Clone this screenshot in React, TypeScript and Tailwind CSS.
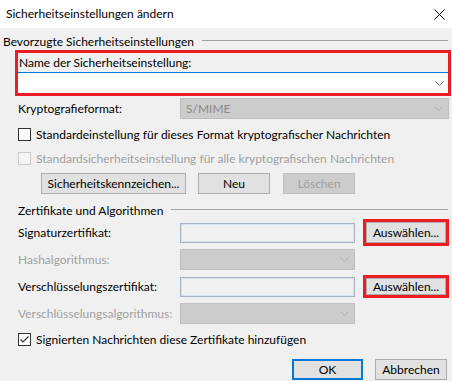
import React from "react";

function Chevron({ color }: { color: string }) {
    return (
        <svg width="9" height="5" viewBox="0 0 9 5" fill="none">
            <path d="M0.5 0.5 L4.5 4.5 L8.5 0.5" stroke={color} strokeWidth="1" />
        </svg>
    );
}

function Checkbox({ checked, disabled }: { checked?: boolean; disabled?: boolean }) {
    return (
        <div
            className={`w-[13px] h-[13px] border flex items-center justify-center ${disabled ? "border-[#cccccc] bg-[#f4f4f4]" : "border-[#333333] bg-white"
                }`}
        >
            {checked && (
                <svg width="11" height="11" viewBox="0 0 11 11" fill="none">
                    <path d="M1.5 5.5 L4 8 L9.5 2.5" stroke="#333333" strokeWidth="1.2" />
                </svg>
            )}
        </div>
    );
}

function Button({ label, width, disabled }: { label: string; width: string; disabled?: boolean }) {
    return (
        <div
            className={`${width} h-[21px] border flex items-center justify-center ${disabled
                    ? "bg-[#cccccc] border-[#bfbfbf] text-[#a0a0a0]"
                    : "bg-[#e1e1e1] border-[#adadad] text-black"
                }`}
        >
            {label}
        </div>
    );
}

function GroupHeader({ title }: { title: string }) {
    return (
        <div className="flex items-center h-[16px] mr-[4px]">
            <span className="whitespace-nowrap">{title}</span>
            <div className="flex-1 h-px bg-[#a0a0a0] ml-[8px] mb-[4px]" />
        </div>
    );
}

function DisabledCombo({ width, text }: { width: string; text?: string }) {
    return (
        <div className={`${width} h-[21px] bg-[#cccccc] border border-[#bfbfbf] flex items-center justify-between pl-[5px] pr-[5px] text-[#8a8a8a]`}>
            <span>{text}</span>
            <Chevron color="#b0b0b0" />
        </div>
    );
}

function TextInput() {
    return <div className="w-[175px] h-[20px] bg-[#f0f0f0] border border-[#a7b3c1] shadow-[inset_0_0_0_1px_#d3e1f1]" />;
}

export default function App() {
    return (
        <div className="w-[452px] h-[381px] bg-[#f0f0f0] text-[12px] leading-none text-black font-['Lato',sans-serif] overflow-hidden">
            <div className="h-7 bg-white flex items-center justify-between pl-[6px] pr-[7px]">
                <span>Sicherheitseinstellungen ändern</span>
                <svg width="11" height="11" viewBox="0 0 11 11" fill="none">
                    <path d="M0.5 0.5 L10.5 10.5 M10.5 0.5 L0.5 10.5" stroke="#000" strokeWidth="1" />
                </svg>
            </div>

            <div className="flex flex-col">
                <div className="mt-[6px] pl-[3px]">
                    <GroupHeader title="Bevorzugte Sicherheitseinstellungen" />
                </div>

                {/* highlighted name combo */}
                <div className="ml-[15px] w-[436px] h-[46px] border-[3px] border-[#ed1c24] flex flex-col">
                    <div className="h-[19px] flex items-center pl-[1px]">Name der Sicherheitseinstellung:</div>
                    <div className="flex-1 bg-white border-t border-[#0078d7] flex items-center justify-end pr-[4px]">
                        <Chevron color="#606060" />
                    </div>
                </div>

                <div className="mt-[2px] ml-[18px] h-[21px] flex items-center">
                    <span className="w-[162px]">Kryptografieformat:</span>
                    <DisabledCombo width="w-[269px]" text="S/MIME" />
                </div>

                <div className="mt-[9px] ml-[18px] h-[13px] flex items-center gap-[5px]">
                    <Checkbox />
                    <span>Standardeinstellung für dieses Format kryptografischer Nachrichten</span>
                </div>

                <div className="mt-[11px] ml-[18px] h-[13px] flex items-center gap-[5px] text-[#a0a0a0]">
                    <Checkbox disabled />
                    <span>Standardsicherheitseinstellung für alle kryptografischen Nachrichten</span>
                </div>

                <div className="mt-[8px] ml-[41px] flex items-center gap-[12px]">
                    <Button label="Sicherheitskennzeichen..." width="w-[145px]" />
                    <Button label="Neu" width="w-[72px]" />
                    <div className="ml-[1px]">
                        <Button label="Löschen" width="w-[72px]" disabled />
                    </div>
                </div>

                <div className="mt-[9px] pl-[18px]">
                    <GroupHeader title="Zertifikate und Algorithmen" />
                </div>

                <div className="ml-[18px] h-[27px] flex items-center">
                    <span className="w-[162px]">Signaturzertifikat:</span>
                    <TextInput />
                    <div className="ml-[8px] w-[86px] h-[27px] border-[3px] border-[#ed1c24] flex">
                        <div className="flex-1 bg-[#e1e1e1] border border-[#adadad] flex items-center justify-center">Auswählen...</div>
                    </div>
                </div>

                <div className="mt-[3px] ml-[18px] h-[21px] flex items-center">
                    <span className="w-[162px] text-[#a0a0a0]">Hashalgorithmus:</span>
                    <DisabledCombo width="w-[175px]" />
                </div>

                <div className="mt-[5px] ml-[18px] h-[23px] flex items-center">
                    <span className="w-[162px]">Verschlüsselungszertifikat:</span>
                    <TextInput />
                    <div className="ml-[8px] w-[86px] h-[23px] border-[3px] border-[#ed1c24] flex">
                        <div className="flex-1 bg-[#e1e1e1] border border-[#adadad] flex items-center justify-center">Auswählen...</div>
                    </div>
                </div>

                <div className="mt-[5px] ml-[18px] h-[21px] flex items-center">
                    <span className="w-[162px] text-[#a0a0a0]">Verschlüsselungsalgorithmus:</span>
                    <DisabledCombo width="w-[175px]" />
                </div>

                <div className="mt-[9px] ml-[18px] h-[13px] flex items-center gap-[5px]">
                    <Checkbox checked />
                    <span>Signierten Nachrichten diese Zertifikate hinzufügen</span>
                </div>

                <div className="mt-[13px] mr-[5px] flex justify-end gap-[12px]">
                    <div className="w-[71px] h-[21px] bg-[#e1e1e1] border-2 border-[#0078d7] flex items-center justify-center">OK</div>
                    <Button label="Abbrechen" width="w-[72px]" />
                </div>
            </div>
        </div>
    );
}
